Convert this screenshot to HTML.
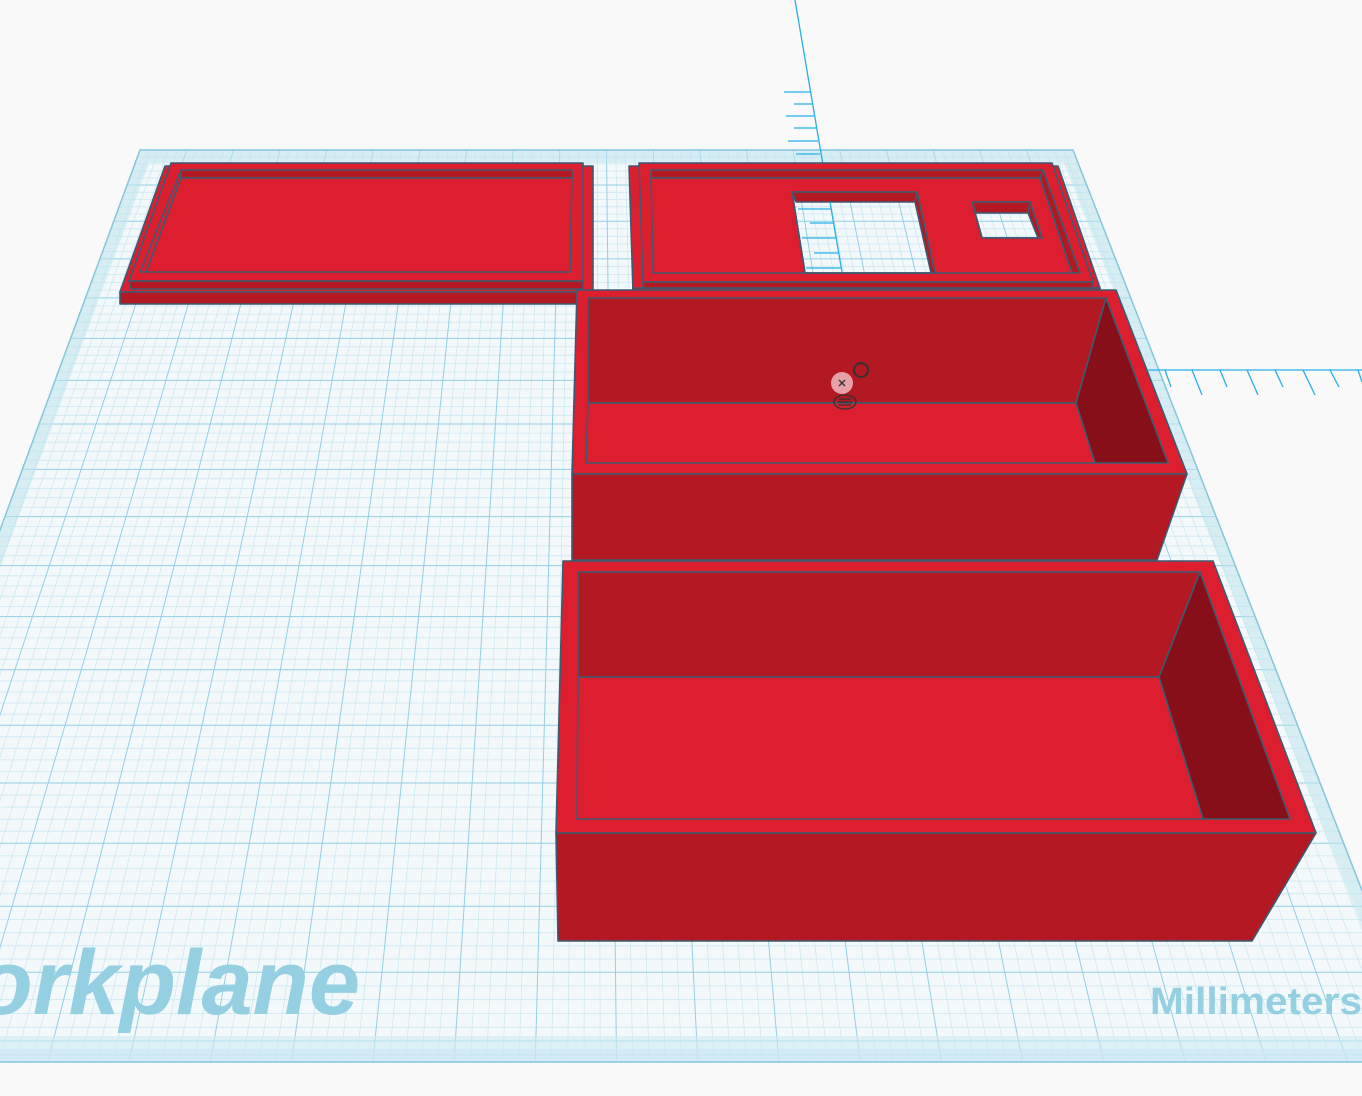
<!DOCTYPE html>
<html><head><meta charset="utf-8"><style>
html,body{margin:0;padding:0;background:#f9f9f9;overflow:hidden}
svg{display:block}
</style></head><body>
<svg width="1362" height="1096" viewBox="0 0 1362 1096" xmlns="http://www.w3.org/2000/svg">
<defs>
<clipPath id="wp"><polygon points="140,150 1073,150 1429,1062 -196,1062"/></clipPath>
</defs>
<rect width="1362" height="1096" fill="#f9f9f9"/>
<polygon points="140,150 1073,150 1429,1062 -196,1062" fill="#f3f9fb"/>
<g clip-path="url(#wp)" fill="none">
<path stroke="#cde8f1" stroke-width="0.8" d="M-200 157H1500M-200 164H1500M-200 171H1500M-200 178H1500M-200 192.3H1500M-200 199.5H1500M-200 206.8H1500M-200 214H1500M-200 228.8H1500M-200 236.3H1500M-200 243.9H1500M-200 251.4H1500M-200 266.7H1500M-200 274.5H1500M-200 282.3H1500M-200 290.1H1500M-200 306H1500M-200 314.1H1500M-200 322.2H1500M-200 330.3H1500M-200 346.8H1500M-200 355.2H1500M-200 363.6H1500M-200 372H1500M-200 389.1H1500M-200 397.8H1500M-200 406.6H1500M-200 415.3H1500M-200 433.1H1500M-200 442.2H1500M-200 451.2H1500M-200 460.3H1500M-200 478.8H1500M-200 488.3H1500M-200 497.7H1500M-200 507.2H1500M-200 526.4H1500M-200 536.2H1500M-200 546H1500M-200 555.8H1500M-200 575.8H1500M-200 586H1500M-200 596.2H1500M-200 606.4H1500M-200 627.2H1500M-200 637.9H1500M-200 648.5H1500M-200 659.2H1500M-200 680.9H1500M-200 692H1500M-200 703H1500M-200 714.1H1500M-200 736.8H1500M-200 748.3H1500M-200 759.9H1500M-200 771.4H1500M-200 795.1H1500M-200 807.1H1500M-200 819.2H1500M-200 831.2H1500M-200 855.9H1500M-200 868.5H1500M-200 881.1H1500M-200 893.7H1500M-200 919.5H1500M-200 932.7H1500M-200 945.8H1500M-200 959H1500M-200 986H1500M-200 999.7H1500M-200 1013.5H1500M-200 1027.3H1500M-200 1054.8H1500
M593 -1079L-179.75 1062M593 -1079L-163.5 1062M593 -1079L-147.25 1062M593 -1079L-131 1062
M593 -1079L-98.5 1062M593 -1079L-82.25 1062M593 -1079L-66 1062M593 -1079L-49.75 1062
M593 -1079L-17.25 1062M593 -1079L-1 1062M593 -1079L15.25 1062M593 -1079L31.5 1062
M593 -1079L64 1062M593 -1079L80.25 1062M593 -1079L96.5 1062M593 -1079L112.75 1062
M593 -1079L145.25 1062M593 -1079L161.5 1062M593 -1079L177.75 1062M593 -1079L194 1062
M593 -1079L226.5 1062M593 -1079L242.75 1062M593 -1079L259 1062M593 -1079L275.25 1062
M593 -1079L307.75 1062M593 -1079L324 1062M593 -1079L340.25 1062M593 -1079L356.5 1062
M593 -1079L389 1062M593 -1079L405.25 1062M593 -1079L421.5 1062M593 -1079L437.75 1062
M593 -1079L470.25 1062M593 -1079L486.5 1062M593 -1079L502.75 1062M593 -1079L519 1062
M593 -1079L551.5 1062M593 -1079L567.75 1062M593 -1079L584 1062M593 -1079L600.25 1062
M593 -1079L632.75 1062M593 -1079L649 1062M593 -1079L665.25 1062M593 -1079L681.5 1062
M593 -1079L714 1062M593 -1079L730.25 1062M593 -1079L746.5 1062M593 -1079L762.75 1062
M593 -1079L795.25 1062M593 -1079L811.5 1062M593 -1079L827.75 1062M593 -1079L844 1062
M593 -1079L876.5 1062M593 -1079L892.75 1062M593 -1079L909 1062M593 -1079L925.25 1062
M593 -1079L957.75 1062M593 -1079L974 1062M593 -1079L990.25 1062M593 -1079L1006.5 1062
M593 -1079L1039 1062M593 -1079L1055.25 1062M593 -1079L1071.5 1062M593 -1079L1087.75 1062
M593 -1079L1120.25 1062M593 -1079L1136.5 1062M593 -1079L1152.75 1062M593 -1079L1169 1062
M593 -1079L1201.5 1062M593 -1079L1217.75 1062M593 -1079L1234 1062M593 -1079L1250.25 1062
M593 -1079L1282.75 1062M593 -1079L1299 1062M593 -1079L1315.25 1062M593 -1079L1331.5 1062
M593 -1079L1364 1062M593 -1079L1380.25 1062M593 -1079L1396.5 1062M593 -1079L1412.75 1062"/>
<path stroke="#93cfe3" stroke-width="1" d="M-200 185H1500M-200 221.3H1500M-200 258.9H1500M-200 297.9H1500M-200 338.4H1500M-200 380.4H1500M-200 424H1500M-200 469.4H1500M-200 516.6H1500M-200 565.6H1500M-200 616.6H1500M-200 669.8H1500M-200 725.2H1500M-200 783H1500M-200 843.3H1500M-200 906.3H1500M-200 972.2H1500M-200 1041H1500
M593 -1079L-114.75 1062M593 -1079L-33.5 1062M593 -1079L47.75 1062M593 -1079L129 1062M593 -1079L210.25 1062M593 -1079L291.5 1062M593 -1079L372.75 1062M593 -1079L454 1062M593 -1079L535.25 1062M593 -1079L616.5 1062M593 -1079L697.75 1062M593 -1079L779 1062M593 -1079L860.25 1062M593 -1079L941.5 1062M593 -1079L1022.75 1062M593 -1079L1104 1062M593 -1079L1185.25 1062M593 -1079L1266.5 1062M593 -1079L1347.75 1062"/>
<polygon points="140,150 1073,150 1429,1062 -196,1062" stroke="#bfe3ef" stroke-width="26" opacity="0.55"/>
<rect x="-200" y="1036" width="1700" height="26" fill="#cfeaf4" opacity="0.6"/>
</g>
<polygon points="140,150 1073,150 1429,1062 -196,1062" fill="none" stroke="#86c6dc" stroke-width="1.5"/>
<text x="360" y="1014" text-anchor="end" font-family="Liberation Sans, sans-serif" font-weight="bold" font-style="italic" font-size="92" fill="#94cfe2">Workplane</text>
<text x="1150" y="1014" font-family="Liberation Sans, sans-serif" font-weight="bold" font-size="38" fill="#94cfe2" textLength="212" lengthAdjust="spacingAndGlyphs">Millimeters</text>

<g stroke="#29aee6" stroke-width="1.3" fill="none">
<line x1="795" y1="0" x2="823" y2="165"/>
<line x1="784" y1="92" x2="810" y2="92"/><line x1="794" y1="104" x2="812" y2="104"/>
<line x1="786" y1="116" x2="814" y2="116"/><line x1="794" y1="128" x2="816" y2="128"/>
<line x1="788" y1="141" x2="818" y2="141"/><line x1="796" y1="154" x2="820" y2="154"/>
<line x1="1148" y1="370" x2="1362" y2="370"/>
<line x1="1165" y1="370" x2="1171" y2="387"/><line x1="1192" y1="370" x2="1202" y2="395"/>
<line x1="1220" y1="370" x2="1227" y2="387"/><line x1="1247" y1="370" x2="1258" y2="395"/>
<line x1="1275" y1="370" x2="1283" y2="387"/><line x1="1303" y1="370" x2="1315" y2="395"/>
<line x1="1330" y1="370" x2="1339" y2="387"/><line x1="1358" y1="370" x2="1362" y2="382"/>
</g>

<g stroke="#3d5a73" stroke-width="1.6" stroke-linejoin="round">
<polygon points="165,166 593,166 593,292 120,292" fill="#dc1e2e"/>
<polygon points="120,292 593,292 593,304 120,304" fill="#b31823"/>
<polygon points="171,163 583,163 583,281 129,281" fill="#dc1e2e"/>
<polygon points="129,281 583,281 583,289 131,289" fill="#b31823"/>
<polygon points="181,170 572,170 572,178 181,178" fill="#b31823"/>
<polygon points="181,178 572,178 570,272 146,272" fill="#dc1e2e"/>
<polygon points="181,170 181,178 146,272 140,272" fill="#dc1e2e"/>

<path fill-rule="evenodd" fill="#dc1e2e" d="M629,166 L1058,166 L1100,288 L633,292 Z M792,192 L917,192 L935,273 L805,273 Z M972,202 L1030,202 L1042,238 L982,238 Z"/>
<polygon points="633,288 1100,288 1100,294 633,294" fill="#b31823"/>
<path fill-rule="evenodd" fill="#dc1e2e" d="M639,163 L1052,163 L1093,282 L643,282 Z M792,192 L917,192 L935,273 L805,273 Z M972,202 L1030,202 L1042,238 L982,238 Z"/>
<polygon points="643,282 1093,282 1093,288 643,288" fill="#b31823"/>
<polygon points="651,170 1043,170 1043,178 651,178" fill="#b31823"/>
<polygon points="1043,170 1080,273 1072,273 1040,178" fill="#b31823"/>
<path fill-rule="evenodd" fill="#dc1e2e" d="M651,178 L1040,178 L1072,273 L653,273 Z M792,192 L917,192 L935,273 L805,273 Z M972,202 L1030,202 L1042,238 L982,238 Z"/>
<polygon points="792,192 917,192 917,202 796,202" fill="#b31823"/>
<polygon points="917,192 935,273 931,273 915,202" fill="#b31823"/>
<polygon points="972,202 1030,202 1030,213 976,213" fill="#b31823"/>
<polygon points="1030,202 1042,238 1038,238 1028,213" fill="#b31823"/>
</g>
<g stroke="#29aee6" stroke-width="1.3">
<line x1="830" y1="202" x2="842" y2="272"/>
<line x1="798" y1="209" x2="831" y2="209"/><line x1="810" y1="223" x2="834" y2="223"/>
<line x1="802" y1="238" x2="836" y2="238"/><line x1="814" y1="253" x2="839" y2="253"/>
<line x1="806" y1="268" x2="841" y2="268"/>
</g>

<g stroke="#3d5a73" stroke-width="1.6" stroke-linejoin="round">
<polygon points="577,290 1116,290 1187,474 572,474" fill="#dc1e2e"/>
<polygon points="572,474 1187,474 1157,560 572,560" fill="#b31823"/>
<polygon points="588,298 1106,298 1076,403 588,403" fill="#b31823"/>
<polygon points="588,403 1076,403 1095,463 586,463" fill="#dc1e2e"/>
<polygon points="1106,298 1168,463 1095,463 1076,403" fill="#870f19"/>
<polygon points="563,561 1213,561 1316,833 556,833" fill="#dc1e2e"/>
<polygon points="556,833 1316,833 1252,941 558,941" fill="#b31823"/>
<polygon points="578,572 1200,572 1159,677 578,677" fill="#b31823"/>
<polygon points="578,677 1159,677 1203,819 577,819" fill="#dc1e2e"/>
<polygon points="1200,572 1290,819 1203,819 1159,677" fill="#870f19"/>
</g>

<circle cx="861" cy="370" r="7" fill="none" stroke="#333" stroke-width="2"/>
<circle cx="842" cy="383" r="11" fill="#e8a0a8"/>
<path d="M839,380 L845,386 M845,380 L839,386" stroke="#333" stroke-width="1.4"/>
<ellipse cx="845" cy="402" rx="11" ry="7" fill="none" stroke="#333" stroke-width="1.3"/>
<path d="M839,399 H851 M838,402 H852 M839,405 H851" stroke="#333" stroke-width="1.2"/>
</svg>
</body></html>
